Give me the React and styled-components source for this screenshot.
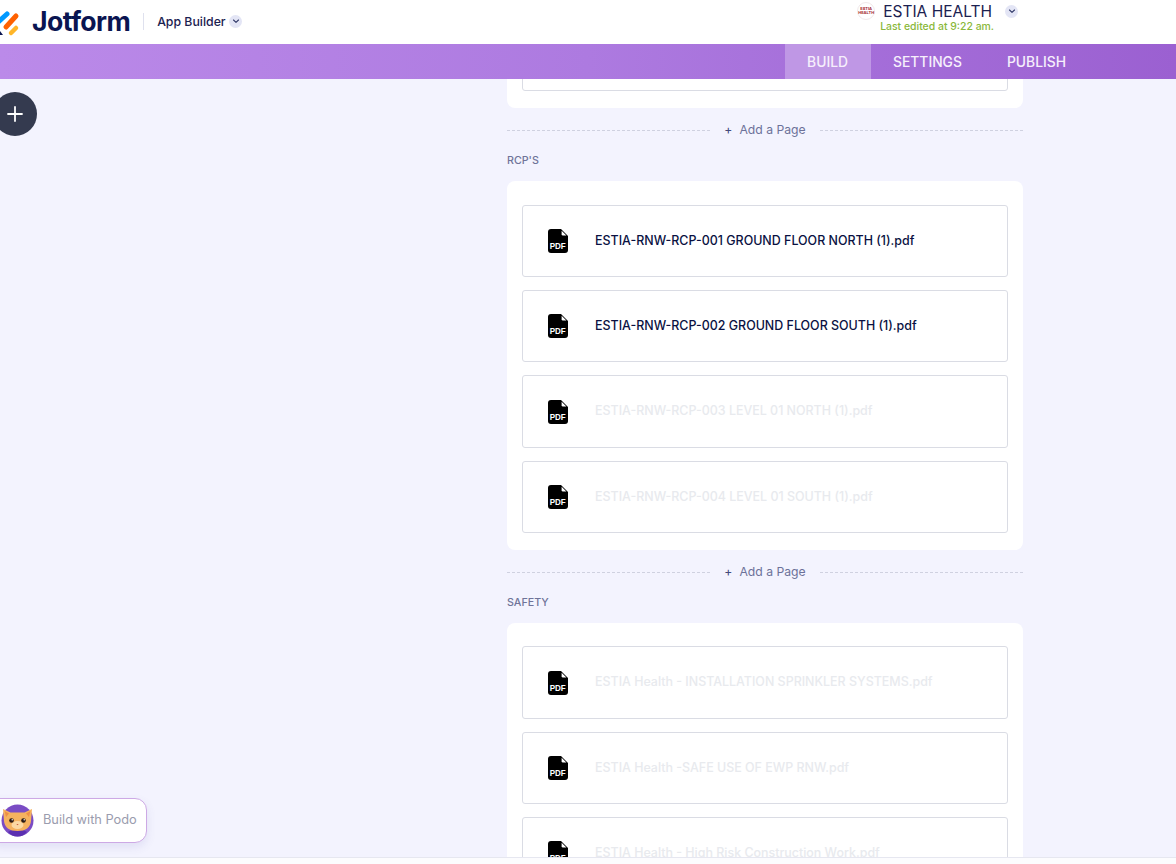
import styled, { createGlobalStyle } from "styled-components";

const GlobalStyle = createGlobalStyle`
  html, body {
    margin: 0;
    height: 100%;
    overflow: hidden;
    background: #f3f3fe;
    font-family: Inter, "Liberation Sans", sans-serif;
  }
  * { box-sizing: border-box; }
`;

const Page = styled.div`
  position: relative;
  display: flex;
  flex-direction: column;
  height: 100vh;
  overflow: hidden;
`;

const Header = styled.header`
  flex: none;
  display: flex;
  align-items: center;
  height: 44px;
  padding: 0 158px 2px 0;
  background: #fff;
`;

const LogoMark = styled.svg`
  flex: none;
  width: 20px;
  height: 34px;
  margin-right: 12px;
`;

const Wordmark = styled.span`
  font-size: 26.6px;
  font-weight: 700;
  letter-spacing: -0.6px;
  color: #0a1551;
`;

const Divider = styled.span`
  width: 1px;
  height: 17px;
  margin: 0 13px 0 13px;
  background: #dfe1ee;
`;

const ProductName = styled.span`
  font-size: 12.3px;
  font-weight: 500;
  color: #1b2150;
`;

const ChevronBadge = styled.span`
  display: inline-flex;
  align-items: center;
  justify-content: center;
  flex: none;
  width: ${(p) => p.$size}px;
  height: ${(p) => p.$size}px;
  margin-left: ${(p) => p.$gap}px;
  border-radius: 50%;
  background: #e3e5f5;
  svg {
    width: 8px;
    height: 8px;
  }
`;

const AppStatus = styled.div`
  display: grid;
  grid-template-columns: 18px auto auto;
  grid-template-rows: 18px 12px;
  align-items: center;
  column-gap: 8px;
  margin-left: auto;
  padding-bottom: 8px;
`;

const AppLogo = styled.span`
  display: flex;
  align-items: center;
  justify-content: center;
  width: 18px;
  height: 18px;
  border-radius: 50%;
  border: 1px solid #f1e9ea;
  font-size: 4px;
  line-height: 4px;
  font-weight: 700;
  text-align: center;
  color: #a3262f;
`;

const AppName = styled.span`
  font-size: 15.5px;
  color: #1b2150;
`;

const EditedNote = styled.span`
  grid-column: 1 / 3;
  margin-left: 23px;
  white-space: nowrap;
  font-size: 10.45px;
  font-weight: 500;
  color: #8ab83a;
`;

const Nav = styled.nav`
  flex: none;
  display: flex;
  justify-content: flex-end;
  height: 35px;
  padding-right: 87.5px;
  background: linear-gradient(90deg, #bb8ae9 0%, #ad7ae0 50%, #9b60d1 100%);
`;

const NavTab = styled.a`
  display: flex;
  align-items: center;
  padding: 0 22.5px;
  font-size: 13.85px;
  font-weight: 500;
  color: #f6effc;
  background: ${(p) => (p.$active ? "#bf97e5" : "transparent")};
`;

const Main = styled.main`
  position: relative;
  flex: 1;
  min-height: 0;
  overflow: hidden;
`;

const Column = styled.div`
  width: 516px;
  margin: -60.3px 0 0 507px;
`;

const Card = styled.section`
  display: flex;
  flex-direction: column;
  gap: 13px;
  padding: ${(p) => p.$top}px 15px 17.2px;
  border-radius: 8px;
  background: #fff;
`;

const PageRow = styled.div`
  display: flex;
  align-items: center;
  gap: 27px;
  height: 72.35px;
  padding-left: 25px;
  border: 1px solid #dadce4;
  border-radius: 3px;
  background: #fff;
`;

const PdfSvg = styled.svg`
  flex: none;
  width: 20px;
  height: 24px;
`;

const PdfLabel = styled.text`
  font-family: "Liberation Sans", sans-serif;
  font-size: 9.6px;
  font-weight: 700;
  fill: #fff;
`;

const FileName = styled.span`
  margin-bottom: 1.5px;
  font-size: 12.45px;
  font-weight: 500;
  color: ${(p) => (p.$faded ? "#e8eaee" : "#0a1142")};
`;

const AddPage = styled.div`
  display: flex;
  align-items: center;
  gap: 14px;
  height: 44.2px;
  font-size: 12.2px;
  color: #6c7199;
  &::before,
  &::after {
    content: "";
    flex: 1;
    border-top: 1px dashed #cfd1e0;
  }
`;

const AddPageLabel = styled.span`
  margin-top: -2px;
`;

const PlusSign = styled.span`
  margin-right: 7px;
  color: #434a7a;
`;

const SectionLabel = styled.h3`
  margin: 0;
  padding: 1.4px 0 0;
  height: 29px;
  font-size: 10.7px;
  line-height: 14px;
  font-weight: 500;
  color: #6f7399;
`;

const AddElementButton = styled.button`
  position: absolute;
  top: 13px;
  left: -7px;
  display: flex;
  align-items: center;
  justify-content: center;
  width: 44px;
  height: 44px;
  padding: 0;
  border: 0;
  border-radius: 50%;
  background: #343a4f;
  color: #fff;
`;

const PodoButton = styled.button`
  position: absolute;
  bottom: 14px;
  left: -12px;
  display: flex;
  align-items: center;
  gap: 9px;
  height: 45px;
  padding: 0 9px 2px 12px;
  border: 1px solid #cda9e5;
  border-radius: 12px;
  background: #fff;
  box-shadow: 0 4px 10px rgba(90, 80, 170, 0.12);
  font: 400 12.8px Inter, "Liberation Sans", sans-serif;
  color: #9a9cae;
`;

const PodoFace = styled.svg`
  width: 33px;
  height: 33px;
  margin-top: 2px;
`;

const Footer = styled.div`
  flex: none;
  height: 7px;
  border-top: 1px solid #e6e7f0;
  background: #fcfcfe;
`;

const sections = [
  {
    label: "RCP'S",
    top: 23.3,
    files: [
      ["ESTIA-RNW-RCP-001 GROUND FLOOR NORTH (1).pdf", false],
      ["ESTIA-RNW-RCP-002 GROUND FLOOR SOUTH (1).pdf", false],
      ["ESTIA-RNW-RCP-003 LEVEL 01 NORTH (1).pdf", true],
      ["ESTIA-RNW-RCP-004 LEVEL 01 SOUTH (1).pdf", true],
    ],
  },
  {
    label: "SAFETY",
    top: 23,
    files: [
      ["ESTIA Health - INSTALLATION SPRINKLER SYSTEMS.pdf", true],
      ["ESTIA Health -SAFE USE OF EWP RNW.pdf", true],
      ["ESTIA Health - High Risk Construction Work.pdf", true],
    ],
  },
];

function Chevron() {
  return (
    <svg viewBox="0 0 8 8" fill="none" stroke="#343c6a" strokeWidth="1.1" strokeLinecap="round" strokeLinejoin="round">
      <path d="M1.5 3 L4 5.4 L6.5 3" />
    </svg>
  );
}

function PdfIcon() {
  return (
    <PdfSvg viewBox="0 0 20 24">
      <path d="M3 0 H13 L20 7 V21 A3 3 0 0 1 17 24 H3 A3 3 0 0 1 0 21 V3 A3 3 0 0 1 3 0 Z" fill="#000" />
      <path d="M13.6 1.8 L18.4 6.6 H15 A1.4 1.4 0 0 1 13.6 5.2 Z" fill="#fff" />
      <PdfLabel x="1.7" y="20" textLength="16" lengthAdjust="spacingAndGlyphs">PDF</PdfLabel>
    </PdfSvg>
  );
}

function PodoIcon() {
  return (
    <PodoFace viewBox="0 0 33 33">
      <circle cx="16.5" cy="16.5" r="16" fill="#7a4cc4" />
      <path d="M7 28 Q16.5 21 26 28 Q22 32.5 16.5 32.5 Q11 32.5 7 28 Z" fill="#5a2fb0" />
      <path d="M2 5 L9.5 8.5 L23.5 8.5 L31 5 L30 17 Q29 27 16.5 27 Q4 27 3 17 Z" fill="#f5b25f" />
      <path d="M3.6 7 L8 9.5 L5 13 Z M29.4 7 L25 9.5 L28 13 Z" fill="#ee8f45" />
      <ellipse cx="16.5" cy="21" rx="6" ry="4" fill="#fbd9a4" />
      <circle cx="10.5" cy="16.5" r="2.3" fill="#2a1a14" />
      <circle cx="22.5" cy="16.5" r="2.3" fill="#2a1a14" />
      <circle cx="11.2" cy="15.8" r="0.7" fill="#fff" />
      <circle cx="23.2" cy="15.8" r="0.7" fill="#fff" />
      <path d="M15.4 20 H17.6 L16.5 21.2 Z" fill="#c45a3a" />
    </PodoFace>
  );
}

export default function App() {
  return (
    <Page>
      <GlobalStyle />
      <Header>
        <LogoMark viewBox="0 0 20 34">
          <g fill="none" strokeLinecap="round" strokeWidth="5">
            <path d="M-3 19 L7 10" stroke="#0099ff" />
            <path d="M6 23 L16 12" stroke="#ff6100" />
            <path d="M11 29 L16 24" stroke="#ffb629" strokeWidth="4.5" />
          </g>
          <path d="M0 27 L3 31 H0 Z" fill="#0a1551" />
        </LogoMark>
        <Wordmark>Jotform</Wordmark>
        <Divider />
        <ProductName>App Builder</ProductName>
        <ChevronBadge $size={13} $gap={3.5}>
          <Chevron />
        </ChevronBadge>
        <AppStatus>
          <AppLogo>ESTIA HEALTH</AppLogo>
          <AppName>ESTIA HEALTH</AppName>
          <ChevronBadge $size={13} $gap={3}>
            <Chevron />
          </ChevronBadge>
          <EditedNote>Last edited at 9:22 am.</EditedNote>
        </AppStatus>
      </Header>
      <Nav>
        <NavTab $active>BUILD</NavTab>
        <NavTab>SETTINGS</NavTab>
        <NavTab>PUBLISH</NavTab>
      </Nav>
      <Main>
        <Column>
          <Card $top={0}>
            <PageRow />
          </Card>
          {sections.map((section) => (
            <div key={section.label}>
              <AddPage>
                <AddPageLabel>
                  <PlusSign>+</PlusSign>Add a Page
                </AddPageLabel>
              </AddPage>
              <SectionLabel>{section.label}</SectionLabel>
              <Card $top={section.top}>
                {section.files.map(([name, faded]) => (
                  <PageRow key={name}>
                    <PdfIcon />
                    <FileName $faded={faded}>{name}</FileName>
                  </PageRow>
                ))}
              </Card>
            </div>
          ))}
        </Column>
        <AddElementButton aria-label="Add element">
          <svg width="18" height="18" viewBox="0 0 18 18" fill="none" stroke="#fff" strokeWidth="1.8" strokeLinecap="round">
            <path d="M9 2 V16 M2 9 H16" />
          </svg>
        </AddElementButton>
        <PodoButton>
          <PodoIcon />
          Build with Podo
        </PodoButton>
      </Main>
      <Footer />
    </Page>
  );
}
